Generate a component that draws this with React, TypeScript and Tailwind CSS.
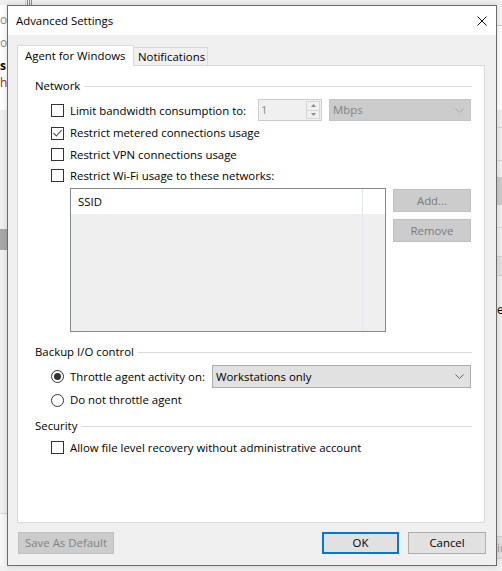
import React from "react";

function CheckBox({ checked }: { checked?: boolean }) {
  return (
    <span className="flex h-[13px] w-[13px] shrink-0 items-center justify-center border border-[#333333] bg-white">
      {checked && (
        <svg width="11" height="11" viewBox="0 0 11 11">
          <path d="M1.5 5 L4.3 8 L9.6 2.2" stroke="#555555" strokeWidth="1.1" fill="none" />
        </svg>
      )}
    </span>
  );
}

function Radio({ checked }: { checked?: boolean }) {
  return (
    <span className="flex h-[13px] w-[13px] shrink-0 items-center justify-center rounded-full border border-[#333333] bg-white">
      {checked && <span className="h-[7px] w-[7px] rounded-full bg-[#333333]" />}
    </span>
  );
}

function Chevron({ color }: { color: string }) {
  return (
    <svg width="9" height="5" viewBox="0 0 9 5">
      <path d="M0.5 0.5 L4.5 4.5 L8.5 0.5" stroke={color} fill="none" strokeWidth="1" />
    </svg>
  );
}

function GroupHeader({ label }: { label: string }) {
  return (
    <div className="flex h-[16px] items-center gap-[4px]">
      <span className="whitespace-nowrap">{label}</span>
      <div className="h-px flex-1 bg-[#dcdcdc]" />
    </div>
  );
}

function DisabledButton({ label, w }: { label: string; w: string }) {
  return (
    <div
      className={`flex h-[23px] items-center justify-center border border-[#bfbfbf] bg-[#cccccc] text-[#7a7a7a] ${w}`}
    >
      {label}
    </div>
  );
}

export default function App() {
  return (
    <div className="relative h-[571px] w-[502px] overflow-hidden bg-[#f0f0f0] font-['Open_Sans',sans-serif] text-[11.4px] text-black">
      {/* Background application */}
      <div className="flex h-full flex-col">
        <div className="flex h-[5px] items-stretch bg-[#f0f0f0]">
          <div className="w-[25px]" />
          <div className="w-px bg-[#d0d0d0]" />
          <div className="ml-[1px] w-px bg-[#8a8a8a]" />
          <div className="ml-[1px] w-px bg-[#8a8a8a]" />
          <div className="ml-[1px] w-px bg-[#8a8a8a]" />
          <div className="flex-1" />
        </div>
        <div className="flex flex-1">
          <div className="flex w-[7px] flex-col">
            <div className="flex h-[105px] flex-col overflow-hidden bg-white text-[12px] leading-[12px]">
              <div className="mt-[9px] whitespace-nowrap text-[#8a8a8a]">oc</div>
              <div className="mt-[11px] whitespace-nowrap text-[#8a8a8a]">ou</div>
              <div className="mt-[11px] whitespace-nowrap font-bold text-black">s</div>
              <div className="mt-[5px] whitespace-nowrap text-[#9b1b1b]">h</div>
            </div>
            <div className="h-[119px] bg-[#f0f0f0]" />
            <div className="h-[21px] bg-[#a9a9a9]" />
            <div className="h-[263px] bg-[#f0f0f0]" />
            <div className="h-px bg-[#d9d9d9]" />
            <div className="flex-1 bg-[#f7f7f7]" />
          </div>
          <div className="flex-1 bg-white" />
          <div className="flex w-[5px] flex-col">
            <div className="h-[20px] bg-[#f7f7f7]" />
            <div className="h-px bg-[#cfcfcf]" />
            <div className="h-[84px] bg-white" />
            <div className="h-[17px] bg-[#f0f0f0]" />
            <div className="h-px bg-[#d9d9d9]" />
            <div className="h-[32px] bg-[#f0f0f0]" />
            <div className="h-px bg-[#d9d9d9]" />
            <div className="h-[16px] bg-[#f0f0f0]" />
            <div className="h-[28px] bg-[#cccccc]" />
            <div className="h-[22px] bg-[#f0f0f0]" />
            <div className="h-px bg-[#d9d9d9]" />
            <div className="h-[28px] bg-[#f0f0f0]" />
            <div className="h-[20px] border-y border-[#d0d0d0] bg-[#e3e3e3]" />
            <div className="h-[28px] bg-[#f0f0f0]" />
            <div className="h-[12px] overflow-hidden whitespace-nowrap text-[12px] leading-[12px]">e</div>
            <div className="h-[220px] bg-[#f0f0f0]" />
            <div className="h-[23px] overflow-hidden whitespace-nowrap border-y border-[#cfcfcf] bg-[#e1e1e1] text-[#9a9a9a] leading-[21px]">
              ir
            </div>
            <div className="flex-1 bg-[#f0f0f0]" />
          </div>
        </div>
        <div className="h-[5px] bg-[#f0f0f0]" />
      </div>

      {/* Dialog */}
      <div className="absolute left-[7px] top-[5px] flex h-[561px] w-[490px] flex-col border border-[#6b6b6b] bg-[#f0f0f0] shadow-[0_0_6px_rgba(0,0,0,0.15)]">
        {/* Title bar */}
        <div className="flex h-[29px] items-center justify-between bg-white pl-[8px] pr-[9px] pt-[1px]">
          <span>Advanced Settings</span>
          <svg width="10" height="10" viewBox="0 0 10 10">
            <path d="M0.5 0.5 L9.5 9.5 M9.5 0.5 L0.5 9.5" stroke="#111" strokeWidth="1" />
          </svg>
        </div>

        {/* Body */}
        <div className="flex flex-1 flex-col pl-[9px] pr-[11px] pt-[10px]">
          {/* Tabs */}
          <div className="flex h-[20px] items-start">
            <div className="relative z-10 flex h-[21px] w-[117px] items-center border border-b-0 border-[#d9d9d9] bg-white pb-[1px] pl-[7px]">
              Agent for Windows
            </div>
            <div className="flex h-[18px] w-[74px] items-center self-end border border-b-0 border-l-0 border-[#d9d9d9] bg-[#f0f0f0] pl-[4px]">
              Notifications
            </div>
          </div>

          {/* Panel */}
          <div className="flex h-[458px] flex-col border border-[#d9d9d9] bg-white pl-[17px] pr-[12px] pt-[12px]">
            <GroupHeader label="Network" />

            <div className="mt-[5px] flex h-[22px] items-center pl-[16px]">
              <div className="flex w-[207px] items-center gap-[6px] pt-[1px]">
                <CheckBox />
                <span className="whitespace-nowrap">Limit bandwidth consumption to:</span>
              </div>
              <div className="flex h-[22px] w-[64px] items-stretch border border-[#cccccc] bg-[#f0f0f0]">
                <span className="flex-1 pl-[2px] leading-[20px] text-[#8a8a8a]">1</span>
                <div className="my-[1px] mr-[1px] flex w-[14px] flex-col border border-[#d6d6d6]">
                  <div className="flex flex-1 items-center justify-center border-b border-[#d6d6d6]">
                    <svg width="5" height="3" viewBox="0 0 5 3">
                      <path d="M0 3 L2.5 0 L5 3 Z" fill="#8a8a8a" />
                    </svg>
                  </div>
                  <div className="flex flex-1 items-center justify-center">
                    <svg width="5" height="3" viewBox="0 0 5 3">
                      <path d="M0 0 L2.5 3 L5 0 Z" fill="#8a8a8a" />
                    </svg>
                  </div>
                </div>
              </div>
              <div className="ml-[7px] flex h-[22px] w-[142px] items-center justify-between border border-[#c4c4c4] bg-[#cccccc] pl-[3px] pr-[6px] text-[#838383]">
                <span>Mbps</span>
                <Chevron color="#a8a8a8" />
              </div>
            </div>

            <div className="mt-[1px] flex h-[22px] items-center gap-[6px] pl-[16px]">
              <CheckBox checked />
              <span>Restrict metered connections usage</span>
            </div>
            <div className="flex h-[21px] items-center gap-[6px] pl-[16px]">
              <CheckBox />
              <span>Restrict VPN connections usage</span>
            </div>
            <div className="flex h-[21px] items-center gap-[6px] pl-[16px]">
              <CheckBox />
              <span>Restrict Wi-Fi usage to these networks:</span>
            </div>

            <div className="mt-[2px] flex pl-[35px]">
              <div className="flex h-[144px] w-[316px] border border-[#828790]">
                <div className="flex w-[291px] flex-col">
                  <div className="flex h-[25px] items-center bg-white pl-[7px]">SSID</div>
                  <div className="flex-1 bg-[#efefef]" />
                </div>
                <div className="flex flex-1 flex-col border-l border-[#dfe6f1]">
                  <div className="h-[25px] bg-white" />
                  <div className="flex-1 bg-[#efefef]" />
                </div>
              </div>
              <div className="ml-[7px] mt-[1px] flex flex-col gap-[7px]">
                <DisabledButton label="Add..." w="w-[78px]" />
                <DisabledButton label="Remove" w="w-[78px]" />
              </div>
            </div>

            <div className="mt-[12px]">
              <GroupHeader label="Backup I/O control" />
            </div>

            <div className="mt-[5px] flex h-[23px] items-center pl-[16px]">
              <div className="flex w-[161px] items-center gap-[6px]">
                <Radio checked />
                <span className="whitespace-nowrap">Throttle agent activity on:</span>
              </div>
              <div className="flex h-[23px] w-[259px] items-center justify-between border border-[#adadad] bg-[#e1e1e1] pl-[3px] pr-[6px]">
                <span>Workstations only</span>
                <Chevron color="#606060" />
              </div>
            </div>
            <div className="mt-[1px] flex h-[22px] items-center gap-[6px] pl-[16px]">
              <Radio />
              <span>Do not throttle agent</span>
            </div>

            <div className="mt-[7px]">
              <GroupHeader label="Security" />
            </div>
            <div className="mt-[3px] flex h-[21px] items-center gap-[6px] pl-[16px]">
              <CheckBox />
              <span>Allow file level recovery without administrative account</span>
            </div>
          </div>

          {/* Footer */}
          <div className="mr-[-1px] mt-[9px] flex items-center">
            <div className="ml-[1px] flex h-[22px] w-[96px] items-center justify-center border border-[#bfbfbf] bg-[#cccccc] text-[#838383]">
              Save As Default
            </div>
            <div className="flex-1" />
            <div className="flex h-[22px] w-[77px] items-center justify-center border-2 border-[#0078d7] bg-[#e1e1e1]">
              OK
            </div>
            <div className="ml-[9px] flex h-[22px] w-[78px] items-center justify-center border border-[#adadad] bg-[#e1e1e1]">
              Cancel
            </div>
          </div>
        </div>
      </div>
    </div>
  );
}
